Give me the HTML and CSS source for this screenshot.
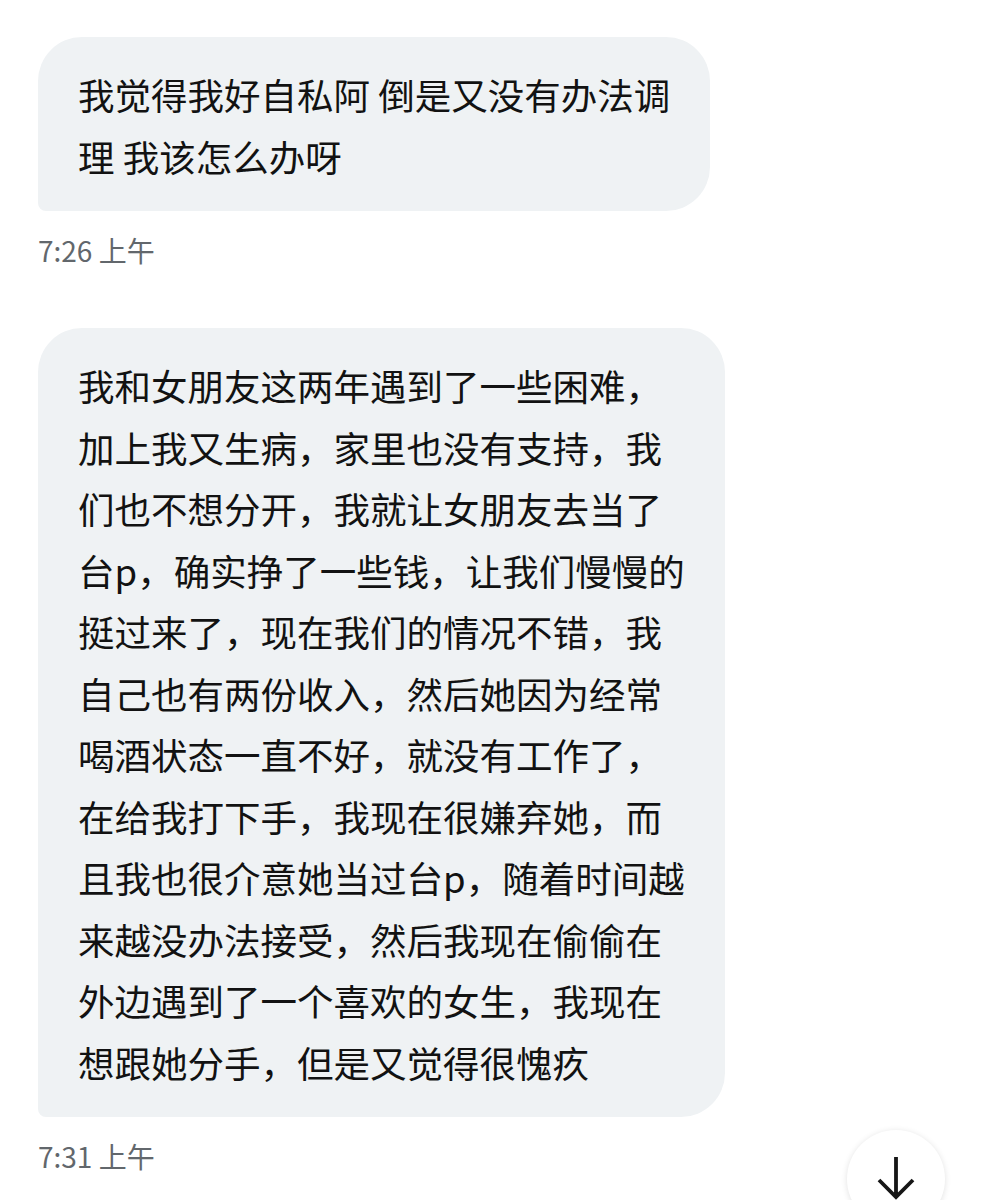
FILE: index.html
```html
<!DOCTYPE html>
<html lang="zh-CN">
<head>
  <meta charset="UTF-8" />
  <meta name="viewport" content="width=device-width, initial-scale=1" />
  <title>消息</title>
  <link rel="stylesheet" href="styles.css">
</head>
<body>
  <section class="chat">
    <div class="message">
      <div class="bubble">我觉得我好自私阿 倒是又没有办法调<br>理 我该怎么办呀</div>
      <div class="time">7:26 上午</div>
    </div>

    <div class="message">
      <div class="bubble">我和女朋友这两年遇到了一些困难，<br>加上我又生病，家里也没有支持，我<br>们也不想分开，我就让女朋友去当了<br>台p，确实挣了一些钱，让我们慢慢的<br>挺过来了，现在我们的情况不错，我<br>自己也有两份收入，然后她因为经常<br>喝酒状态一直不好，就没有工作了，<br>在给我打下手，我现在很嫌弃她，而<br>且我也很介意她当过台p，随着时间越<br>来越没办法接受，然后我现在偷偷在<br>外边遇到了一个喜欢的女生，我现在<br>想跟她分手，但是又觉得很愧疚</div>
      <div class="time">7:31 上午</div>
    </div>
  </section>

  <button class="scroll-down" title="滚动到底部">
    <svg width="98" height="98" viewBox="0 0 98 98">
      <path d="M49 27 V67 M32 50 L49 67 L66 50" fill="none" stroke="#161616" stroke-width="3.8" />
    </svg>
  </button>
</body>
</html>
```

FILE: styles.css
```css
* {
  box-sizing: border-box;
}
body {
  margin: 0;
  padding: 0;
  background: #fff;
  font-family: "Noto Sans CJK SC", "Noto Sans", sans-serif;
  color: #121212;
  overflow: hidden;
}
.chat {
  padding: 37px 0 0 38px;
  display: flex;
  flex-direction: column;
  gap: 60px;
}
.message {
  display: flex;
  flex-direction: column;
  align-items: flex-start;
}
.bubble {
  width: fit-content;
  padding: 27px 40px 24px 40px;
  background: #eff2f4;
  border-radius: 44px 44px 44px 8px;
  font-size: 36.5px;
  line-height: 61.5px;
  white-space: nowrap;
}
.time {
  margin-top: 21px;
  font-size: 28px;
  line-height: 36px;
  color: #62676c;
}
.scroll-down {
  position: fixed;
  right: 48px;
  bottom: -28px;
  width: 98px;
  height: 98px;
  padding: 0;
  border: none;
  border-radius: 50%;
  background: #fff;
  box-shadow: 0 1px 6px rgba(0, 0, 0, 0.12);
  cursor: pointer;
}
.scroll-down svg {
  display: block;
}
```
